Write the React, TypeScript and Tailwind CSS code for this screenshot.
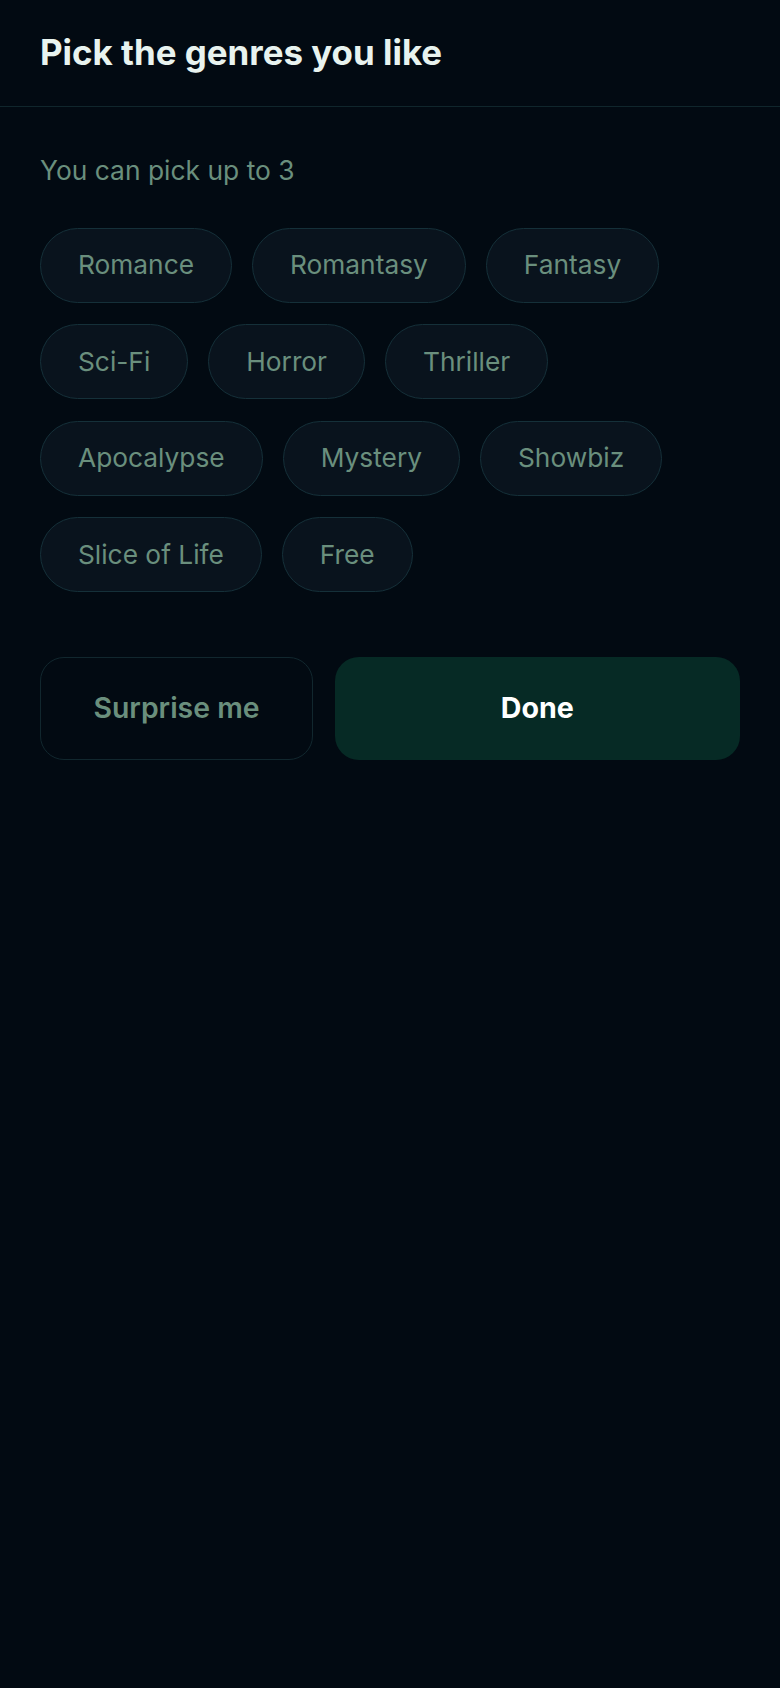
import React from "react";

const genres = [
  "Romance",
  "Romantasy",
  "Fantasy",
  "Sci-Fi",
  "Horror",
  "Thriller",
  "Apocalypse",
  "Mystery",
  "Showbiz",
  "Slice of Life",
  "Free",
];

export default function App() {
  return (
    <div
      className="min-h-[1688px] w-full bg-[#020a12]"
      style={{ fontFamily: "Inter, 'Noto Sans', sans-serif" }}
    >
      <header className="flex h-[107px] items-center border-b border-[#10262c] px-[40px]">
        <h1 className="text-[34.9px] font-bold leading-[1.2] text-[#e8f3ef]">
          Pick the genres you like
        </h1>
      </header>
      <main className="px-[40px] pt-[48px]">
        <p className="text-[26.4px] leading-[1.2] text-[#6a8f7d]">
          You can pick up to 3
        </p>
        <div className="mt-[41px] flex flex-wrap gap-x-[20px] gap-y-[21.5px]">
          {genres.map((g) => (
            <button
              key={g}
              className="flex h-[75px] items-center rounded-full border border-[#153039] bg-[#09131d] px-[37px] text-[26.3px] text-[#6a8f7d]"
            >
              {g}
            </button>
          ))}
        </div>
        <div className="mt-[65px] flex gap-[21.5px]">
          <button className="flex h-[103px] w-[273px] items-center justify-center rounded-[24px] border border-[#11272e] text-[28.4px] font-semibold text-[#6a8f7d]">
            Surprise me
          </button>
          <button className="flex h-[103px] flex-1 items-center justify-center rounded-[24px] bg-[#062a25] text-[28.6px] font-bold text-white">
            Done
          </button>
        </div>
      </main>
    </div>
  );
}
